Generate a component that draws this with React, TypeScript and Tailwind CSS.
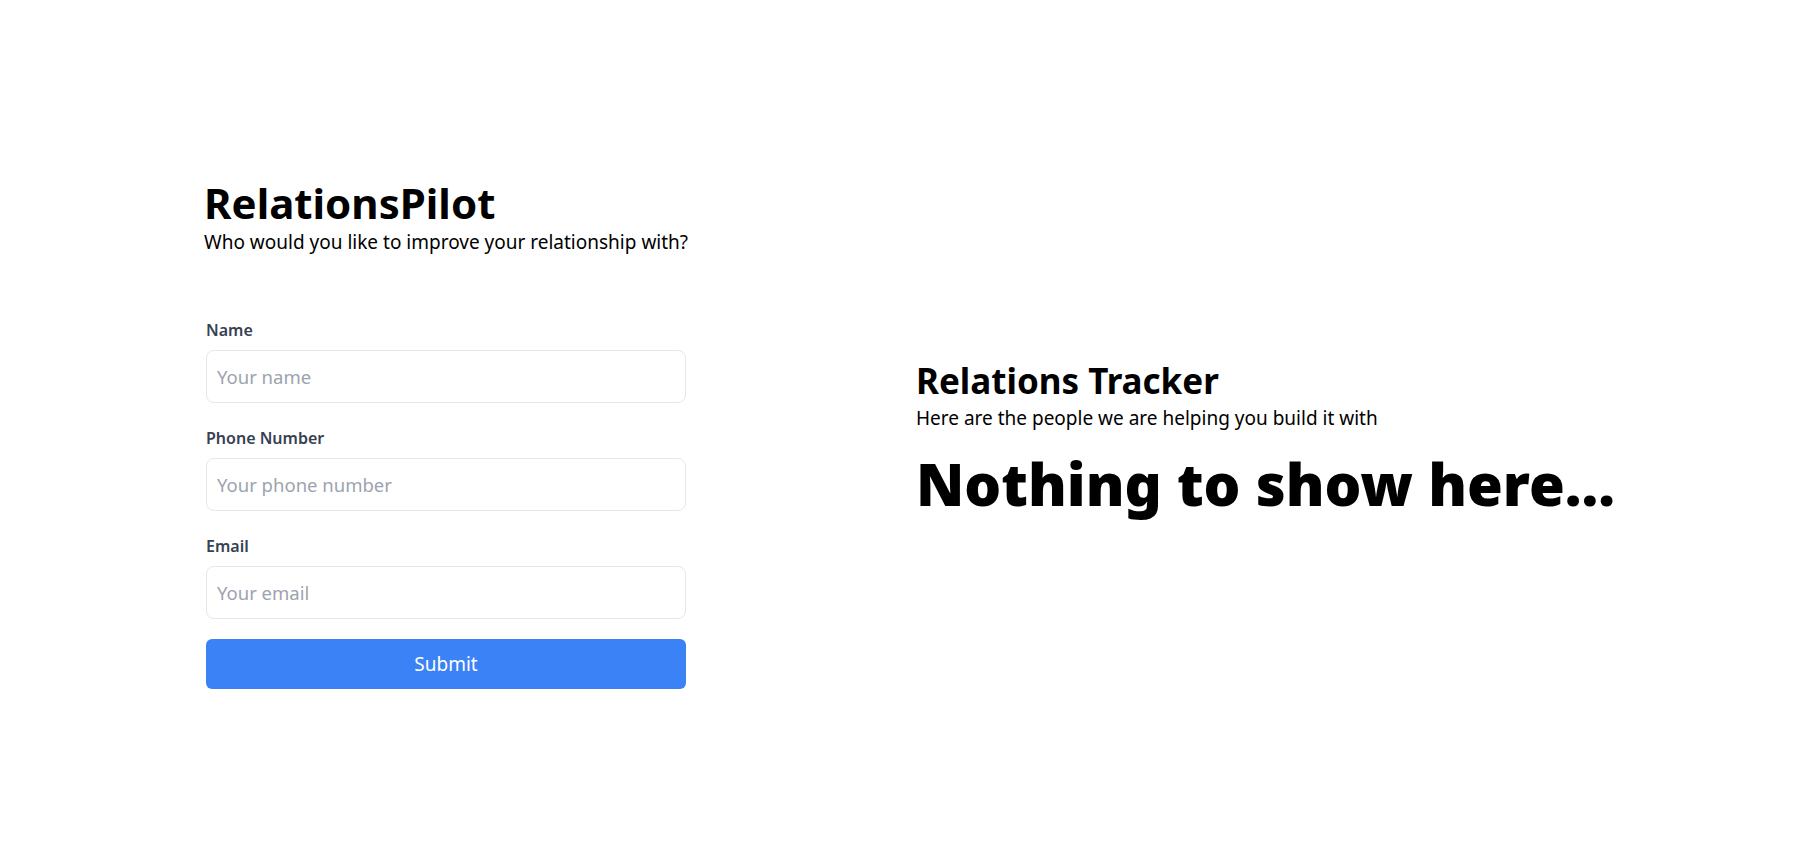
import React, { useState } from 'react';

interface Field {
  id: string;
  label: string;
  placeholder: string;
  type: string;
}

const fields: Field[] = [
  { id: 'name', label: 'Name', placeholder: 'Your name', type: 'text' },
  { id: 'phone', label: 'Phone Number', placeholder: 'Your phone number', type: 'tel' },
  { id: 'email', label: 'Email', placeholder: 'Your email', type: 'email' },
];

export default function App() {
  const [values, setValues] = useState<Record<string, string>>({ name: '', phone: '', email: '' });

  return (
    <div className="h-screen w-full bg-white flex items-center text-black font-['Noto_Sans',sans-serif]">
      <div className="ml-[204px] mt-[7px] w-[482px] flex flex-col">
        <h1 className="text-[42px] font-bold leading-[46px] whitespace-nowrap">RelationsPilot</h1>
        <p className="text-[19px] leading-[26px] mt-[3px] whitespace-nowrap">Who would you like to improve your relationship with?</p>

        <form
          className="mt-[63px] flex flex-col"
          onSubmit={(e) => e.preventDefault()}
        >
          {fields.map((f, i) => (
            <div key={f.id} className={i > 0 ? 'mt-[23px]' : ''}>
              <label htmlFor={f.id} className="block text-base font-semibold text-[#374151] leading-6 pl-[2px]">
                {f.label}
              </label>
              <input
                id={f.id}
                type={f.type}
                value={values[f.id]}
                onChange={(e) => setValues({ ...values, [f.id]: e.target.value })}
                placeholder={f.placeholder}
                className="mt-2 block w-[480px] h-[53px] ml-[2px] rounded-lg border border-[#e5e7eb] px-[10px] text-[18.5px] placeholder:text-[#9ca3af] outline-none focus:border-[#3b82f6]"
              />
            </div>
          ))}
          <button
            type="submit"
            className="mt-5 ml-[2px] w-[480px] h-[50px] rounded-md bg-[#3b82f6] text-white text-[19px] hover:bg-[#2563eb]"
          >
            Submit
          </button>
        </form>
      </div>

      <div className="ml-[230px] mt-[11px] flex flex-col">
        <h2 className="text-[35px] font-bold leading-[42px]">Relations Tracker</h2>
        <p className="text-[19px] leading-[26px] mt-[3px] whitespace-nowrap">Here are the people we are helping you build it with</p>
        <h3 className="mt-[24px] text-[58px] font-black leading-none whitespace-nowrap">Nothing to show here...</h3>
      </div>
    </div>
  );
}
